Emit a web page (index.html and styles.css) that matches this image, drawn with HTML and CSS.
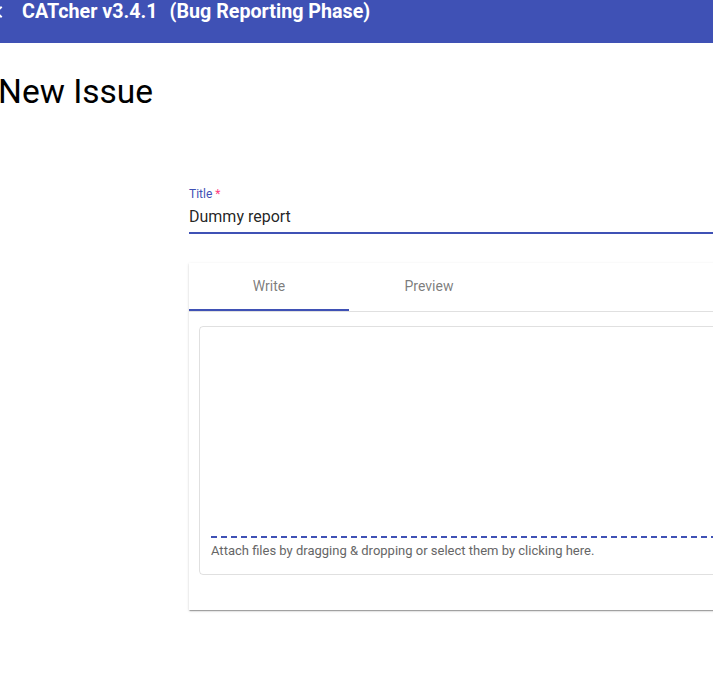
FILE: index.html
```html
<!DOCTYPE html>
<html lang="en">
<head>
<meta charset="utf-8">
<title>CATcher - New Issue</title>
<link rel="stylesheet" href="styles.css">
</head>
<body>
  <header class="toolbar">
    <svg class="nav-icon" width="24" height="24" viewBox="0 0 24 24" aria-hidden="true">
      <path d="M15.41 7.41 14 6l-6 6 6 6 1.41-1.41L10.83 12z" fill="#fff"/>
    </svg>
    <span class="app-title">CATcher v3.4.1</span>
    <span class="phase">(Bug Reporting Phase)</span>
  </header>

  <main class="page">
    <h1 class="page-title">New Issue</h1>

    <form class="issue-form">
      <div class="field">
        <label class="field-label">Title <span class="req">*</span></label>
        <div class="field-value">Dummy report</div>
        <div class="field-underline"></div>
      </div>

      <section class="card">
        <nav class="tabs">
          <div class="tab active"><span class="tab-label">Write</span></div>
          <div class="tab"><span class="tab-label">Preview</span></div>
        </nav>
        <div class="card-body">
          <div class="editor">
            <div class="textarea"></div>
            <div class="drop-line"></div>
            <div class="attach">Attach files by dragging &amp; dropping or select them by clicking here.</div>
          </div>
        </div>
      </section>
    </form>
  </main>
</body>
</html>
```

FILE: styles.css
```css
html, body {
  margin: 0;
  padding: 0;
  overflow: hidden;
  background: #fff;
}

body {
  font-family: Roboto, "Liberation Sans", sans-serif;
  color: rgba(0, 0, 0, 0.87);
  width: 713px;
  height: 677px;
}

.toolbar {
  height: 43px;
  background: #3f51b5;
  color: #fff;
  display: flex;
  align-items: flex-start;
  box-sizing: border-box;
}

.nav-icon {
  margin-left: -13px;
  flex: none;
}

.app-title,
.phase {
  font-size: 19.7px;
  font-weight: 700;
  line-height: 24px;
  white-space: nowrap;
}

.app-title {
  margin-left: 11px;
}

.phase {
  margin-left: 12px;
}

.page-title {
  font-size: 33.5px;
  font-weight: 400;
  line-height: 40px;
  margin: 29px 0 0 -2px;
  color: #000;
}

.issue-form {
  margin-left: 189px;
  width: 620px;
  margin-top: 75px;
}

.field {
  display: flex;
  flex-direction: column;
}

.field-label {
  font-size: 12px;
  line-height: 14px;
  color: #3f51b5;
}

.req {
  color: #ff4081;
}

.field-value {
  margin-top: 6px;
  font-size: 16px;
  line-height: 20px;
  color: rgba(0, 0, 0, 0.87);
}

.field-underline {
  margin-top: 5px;
  height: 2px;
  background: #3f51b5;
}

.card {
  margin-top: 29px;
  background: #fff;
  box-shadow: 0 2px 1px -1px rgba(0, 0, 0, 0.2), 0 1px 1px 0 rgba(0, 0, 0, 0.14), 0 1px 3px 0 rgba(0, 0, 0, 0.12);
}

.tabs {
  display: flex;
  height: 48px;
  border-bottom: 1px solid rgba(0, 0, 0, 0.12);
}

.tab {
  width: 160px;
  display: flex;
  align-items: center;
  justify-content: center;
  box-sizing: border-box;
  padding-bottom: 2px;
}

.tab-label {
  font-size: 14px;
  font-weight: 400;
  color: rgba(0, 0, 0, 0.87);
  opacity: 0.6;
}

.tab.active {
  box-shadow: inset 0 -2px 0 #3f51b5;
}

.card-body {
  padding: 14px 0 35px 10px;
}

.editor {
  border: 1px solid rgba(0, 0, 0, 0.12);
  border-radius: 4px;
  padding: 0 0 0 11px;
}

.textarea {
  height: 209px;
}

.drop-line {
  height: 2px;
  background: repeating-linear-gradient(90deg, #3f51b5 0 6px, transparent 6px 10px);
}

.attach {
  font-size: 13px;
  line-height: 15px;
  color: #666;
  padding: 5px 0 16px 0;
}
```
